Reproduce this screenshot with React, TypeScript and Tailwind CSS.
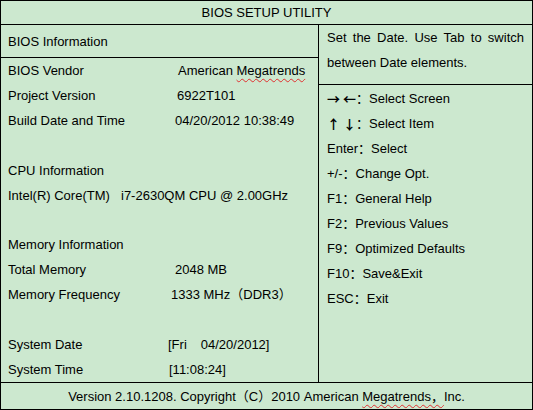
const font = "font-['Liberation_Sans','Noto_Sans_CJK_SC',sans-serif]"

type InfoRow = { label?: string; value?: React.ReactNode; labelW?: string }

const Squiggle = ({ children }: { children: React.ReactNode }) => (
  <span className="underline decoration-wavy decoration-[#e03030] decoration-1 underline-offset-[3px]">
    {children}
  </span>
)

const Arrows = ({ a, b }: { a: string; b: string }) => (
  <span className="inline-flex gap-[3px] font-['Noto_Sans_CJK_SC',sans-serif] font-bold">
    <span>{a}</span>
    <span>{b}</span>
  </span>
)

const rows: InfoRow[] = [
  {
    label: 'BIOS Vendor',
    labelW: 'w-[170px]',
    value: (
      <>
        American <Squiggle>Megatrends</Squiggle>
      </>
    ),
  },
  { label: 'Project Version', labelW: 'w-[169px]', value: '6922T101' },
  { label: 'Build Date and Time', labelW: 'w-[167px]', value: '04/20/2012 10:38:49' },
  {},
  { label: 'CPU Information' },
  {
    label: 'Intel(R) Core(TM)',
    labelW: 'w-[113px]',
    value: 'i7-2630QM CPU @ 2.00GHz',
  },
  {},
  { label: 'Memory Information' },
  { label: 'Total Memory', labelW: 'w-[167px]', value: '2048 MB' },
  { label: 'Memory Frequency', labelW: 'w-[163px]', value: '1333 MHz（DDR3）' },
  {},
  {
    label: 'System Date',
    labelW: 'w-[160px]',
    value: (
      <>
        [Fri<span className="inline-block w-[14px]" />04/20/2012]
      </>
    ),
  },
  { label: 'System Time', labelW: 'w-[161px]', value: '[11:08:24]' },
]

const help: React.ReactNode[] = [
  <>
    <Arrows a="→" b="←" />：Select Screen
  </>,
  <>
    <Arrows a="↑" b="↓" />：Select Item
  </>,
  'Enter：Select',
  '+/-：Change Opt.',
  'F1：General Help',
  'F2：Previous Values',
  'F9：Optimized Defaults',
  'F10：Save&Exit',
  'ESC：Exit',
]

export default function App() {
  return (
    <div
      className={`flex h-[410px] w-[533px] flex-col border border-black bg-[#cce8cf] text-[13px] leading-none text-black ${font}`}
    >
      <div className="flex h-[24px] items-center justify-center border-b border-black">
        BIOS SETUP UTILITY
      </div>

      <div className="flex h-[358px] border-b border-black">
        <div className="flex w-[318px] flex-col border-r border-black">
          <div className="flex h-[33px] items-center border-b border-black pl-[7px]">
            BIOS Information
          </div>
          <div className="flex flex-1 flex-col">
            {rows.map((row, i) => (
              <div key={i} className="flex flex-1 items-center pl-[7px] whitespace-nowrap">
                {row.label && (
                  <span className={row.labelW ?? ''}>{row.label}</span>
                )}
                {row.value && <span>{row.value}</span>}
              </div>
            ))}
          </div>
        </div>

        <div className="flex flex-1 flex-col">
          <div className="h-[60px] border-b border-black pl-[8px] pr-[8px]">
            <div className="flex h-[25px] items-center">
              <span className="w-full text-justify [text-align-last:justify]">
                Set the Date. Use Tab to switch
              </span>
            </div>
            <div className="flex h-[25px] items-center">between Date elements.</div>
          </div>
          <div className="flex flex-col pl-[8px] pt-[1px]">
            {help.map((h, i) => (
              <div key={i} className="flex h-[25px] items-center whitespace-nowrap">
                {h}
              </div>
            ))}
          </div>
        </div>
      </div>

      <div className="flex flex-1 items-center justify-center whitespace-nowrap">
        Version 2.10.1208. Copyright（C）2010 American&nbsp;
        <Squiggle>Megatrends，</Squiggle>Inc.
      </div>
    </div>
  )
}
